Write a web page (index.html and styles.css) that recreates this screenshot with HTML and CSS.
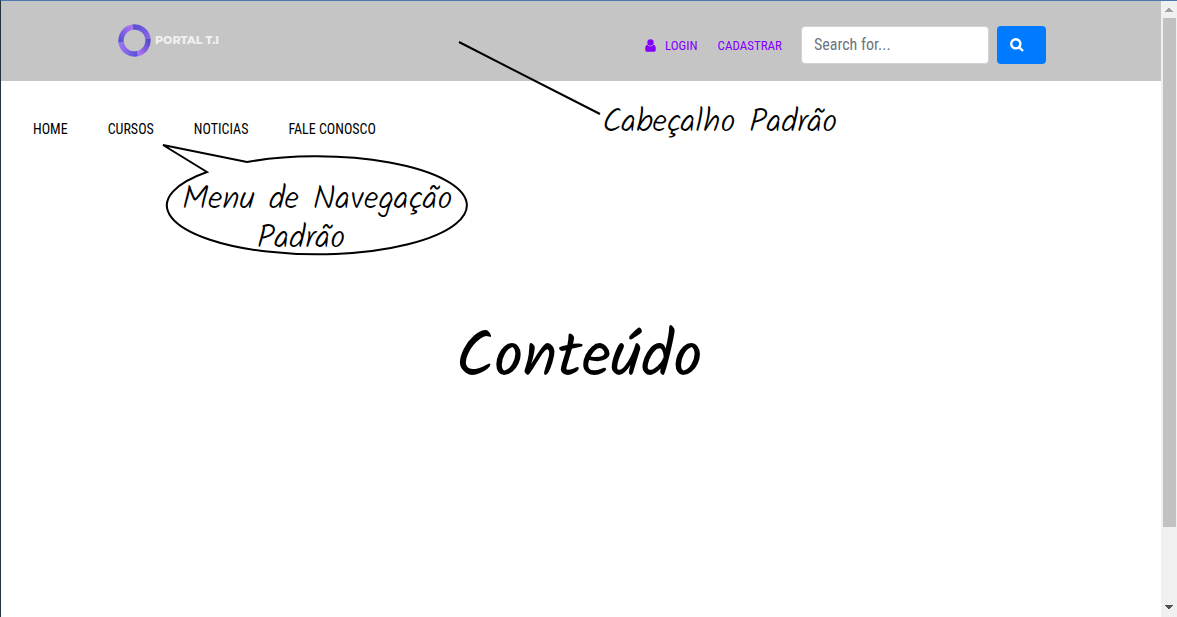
FILE: index.html
```html
<!DOCTYPE html>
<html lang="pt-BR">
<head>
<meta charset="utf-8">
<meta name="viewport" content="width=device-width, initial-scale=1">
<title>Portal T.I</title>
<link rel="stylesheet" href="styles.css">
</head>
<body>
<div class="window">
  <div class="page">
    <header class="header">
      <a class="logo" href="#">
        <svg class="logo-ring" viewBox="0 0 34 34" aria-hidden="true">
          <defs>
            <linearGradient id="g1" x1="0" y1="0" x2="1" y2="1"><stop offset="0" stop-color="#5a50d4"/><stop offset="1" stop-color="#8a64ea"/></linearGradient>
            <linearGradient id="g2" x1="1" y1="0" x2="0" y2="1"><stop offset="0" stop-color="#5248cf"/><stop offset="1" stop-color="#b274f4"/></linearGradient>
            <linearGradient id="g3" x1="1" y1="0" x2="0" y2="0"><stop offset="0" stop-color="#5550d6"/><stop offset="1" stop-color="#9a70f2"/></linearGradient>
            <linearGradient id="g4" x1="0" y1="1" x2="1" y2="0"><stop offset="0" stop-color="#5a50d6"/><stop offset="1" stop-color="#b075f2"/></linearGradient>
          </defs>
          <g fill="none" stroke-width="5.500">
            <path stroke="url(#g1)" d="M15 3.200A14 14 0 0 1 30.800 15"/>
            <path stroke="url(#g2)" d="M30.800 15A14 14 0 0 1 20 30.600"/>
            <path stroke="url(#g3)" d="M20 30.600A14 14 0 0 1 3.200 19"/>
            <path stroke="url(#g4)" d="M3.200 19A14 14 0 0 1 15 3.200"/>
          </g>
        </svg>
        <span>PORTAL T.I</span>
      </a>
      <nav class="account" aria-label="Conta">
        <a href="#"><svg class="user-icon" viewBox="0 0 11 13" aria-hidden="true"><circle cx="5.500" cy="3.500" r="3.200"/><path d="M2.300 5.800C.7 6.300.2 8 .2 10.200.2 12 1 12.800 2.300 12.800h6.400c1.300 0 2.100-.8 2.100-2.600 0-2.200-.5-3.900-2.100-4.400a4 4 0 0 1-6.400 0z"/></svg>LOGIN</a>
        <a href="#">CADASTRAR</a>
      </nav>
      <form class="search">
        <input type="text" placeholder="Search for..." aria-label="Search for">
        <button type="button" aria-label="Search"><svg viewBox="0 0 14 14" aria-hidden="true"><circle cx="5.800" cy="5.800" r="4.600"/><path d="M9.300 9.300L13 13"/></svg></button>
      </form>
    </header>
    <nav class="menu" aria-label="Principal">
      <a href="#">HOME</a>
      <a href="#">CURSOS</a>
      <a href="#">NOTICIAS</a>
      <a href="#">FALE CONOSCO</a>
    </nav>
    <main class="content"><h1>Conteúdo</h1></main>
    <svg class="pointer" viewBox="0 0 144 76" aria-hidden="true"><path d="M2 2L143 74"/></svg>
    <p class="note header-note">Cabeçalho Padrão</p>
    <div class="note balloon">
      <svg viewBox="0 0 306 116" aria-hidden="true"><path d="M48 31L4 4L88 21A150 49 0 1 1 48 31Z"/></svg>
      <p>Menu de Navegação</p>
      <p class="balloon-end">Padrão</p>
    </div>
  </div>
  <div class="scrollbar" aria-hidden="true">
    <svg viewBox="0 0 16 16"><path fill="#a3a3a3" d="M4 11h8v-1h-1v-1h-1v-1h-1v-1h-2v1h-1v1h-1v1h-1z"/></svg>
    <div class="thumb"></div>
    <svg viewBox="0 0 16 16"><path fill="#505050" d="M4 4h8v1h-1v1h-1v1h-1v1h-2v-1h-1v-1h-1v-1h-1z"/></svg>
  </div>
</div>
</body>
</html>
```
FILE: styles.css
```css
* { box-sizing: border-box; }
body {
  margin: 0;
  background: #fff;
  color: #000;
  font-family: "Roboto Condensed", "Liberation Sans Narrow", "Roboto", sans-serif;
}
a { color: inherit; text-decoration: none; }
svg { display: block; }
.window {
  display: flex;
  min-height: 100vh;
  border-top: 1px solid #4a78b5;
  border-left: 1px solid #26323c;
}
.page {
  position: relative;
  display: flex;
  flex: 1;
  flex-direction: column;
  min-width: 0;
}
.header {
  display: flex;
  align-items: center;
  height: 80px;
  padding: 0 115px 0 117px;
  background: #c5c5c5;
}
.logo {
  display: flex;
  align-items: center;
  gap: 4px;
  margin-right: auto;
  padding-bottom: 2px;
  color: #f0f0f0;
  font: 800 11px "Montserrat", "Open Sans", sans-serif;
}
.logo-ring { width: 33px; height: 33px; }
.account {
  display: flex;
  gap: 20px;
  margin-right: 19px;
  padding-top: 8px;
  color: #7f00ff;
  font-size: 13px;
}
.account a { display: flex; align-items: center; }
.user-icon { width: 11px; height: 13px; margin-right: 9px; fill: #8500ff; }
.search { display: flex; gap: 8px; padding-top: 8px; }
.search input {
  width: 188px;
  height: 38px;
  padding: 0 12px 2px;
  border: 1px solid #ced4da;
  border-radius: 4px;
  background: #fff;
  font: 16px "Roboto Condensed", "Liberation Sans Narrow", "Roboto", sans-serif;
}
.search input::placeholder { color: #6c757d; opacity: 1; }
.search button {
  width: 49px;
  height: 38px;
  padding: 0 13px;
  border: 0;
  border-radius: 4px;
  background: #007bff;
}
.search button svg { width: 14px; height: 14px; fill: none; stroke: #fff; stroke-width: 2.400; }
.menu {
  display: flex;
  gap: 40px;
  padding: 38px 32px 0;
  font-size: 14px;
  line-height: 20px;
}
.content { padding: 180px 4px 0 0; text-align: center; }
.content h1, .note {
  margin: 0;
  font-family: "Ink Free", "Kalam", "Lato", sans-serif;
  font-weight: 300;
}
.content h1 { font-size: 64px; font-weight: 400; line-height: 80px; }
.note { position: absolute; font-size: 33px; line-height: 39px; white-space: nowrap; }
.header-note { top: 103px; left: 601px; }
.pointer { position: absolute; top: 39px; left: 456px; width: 144px; fill: none; stroke: #000; stroke-width: 2; }
.balloon { top: 140px; left: 158px; width: 306px; height: 116px; padding: 40px 0 0 10px; text-align: center; }
.balloon p { margin: 0; }
.balloon .balloon-end { padding-right: 32px; }
.balloon svg { position: absolute; top: 0; left: 0; width: 100%; overflow: visible; fill: none; stroke: #000; stroke-width: 2; }
.scrollbar { display: flex; flex-direction: column; width: 16px; background: #f0f0f0; }
.scrollbar svg { width: 16px; height: 16px; }
.thumb { flex: 0 1 509px; width: 13px; margin: 1px 1px auto 2px; background: #c1c1c1; }
```
